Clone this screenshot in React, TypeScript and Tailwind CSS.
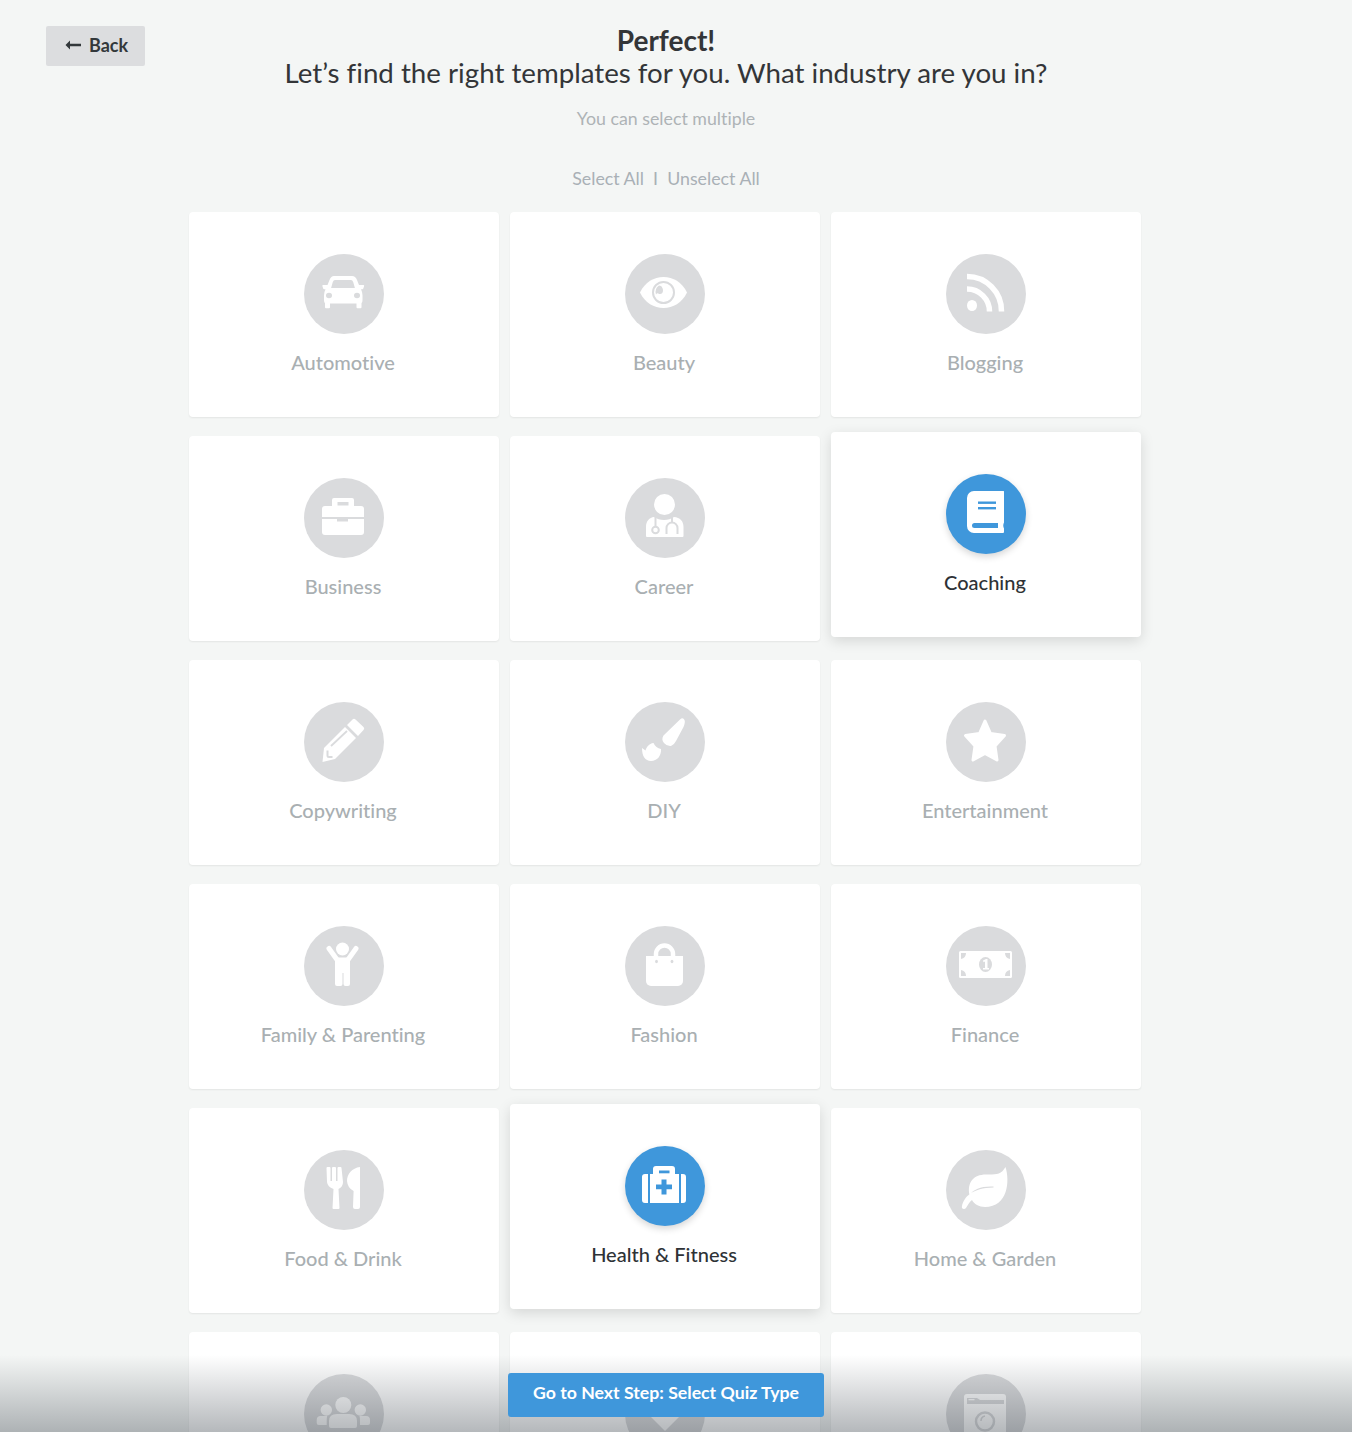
import React from "react";

const icons: Record<string, (d: string) => React.ReactNode> = {
  car: (d) => (
    <>
      <path fill="#fff" d="M30 22h18q3.500 0 5 4l2 5h4a1 1 0 0 1 1 1.400l-.7 2.200a1 1 0 0 1-1 .7H57q1.500 3 1.500 6v5q0 2-1 3v4a1 1 0 0 1-1 1h-3a1 1 0 0 1-1-1v-3.800H26v3.800a1 1 0 0 1-1 1h-3a1 1 0 0 1-1-1v-4q-1-1-1-3v-5q0-3 1.500-6h-1.300a1 1 0 0 1-1-.7l-.7-2.200a1 1 0 0 1 1-1.400h4l2-5q1.500-4 4.500-4z" />
      <path fill={d} d="M31 26h16q1.500 0 2.200 2l1.700 6H27.100l1.700-6q.7-2 2.200-2z" />
      <ellipse cx="25" cy="41.500" rx="3" ry="2.800" fill={d} />
      <ellipse cx="53" cy="41.500" rx="3" ry="2.800" fill={d} />
    </>
  ),
  eye: (d) => (
    <>
      <path fill="#fff" d="M15 38.500C20 28 29 23 38.500 23S57 28 62 38.500C57 49 48 54 38.500 54S20 49 15 38.500z" />
      <circle cx="38.500" cy="38.500" r="10.500" fill="none" stroke={d} strokeWidth="2" />
      <path fill={d} d="M34 31.500a8 8 0 0 0-3 9c1-1.500 2-1.500 3-.5 3 .5 4-1.500 4-3.500 0-2-1-3.500-2-4.500-.7-.2-1.300-.2-2-.5z" />
    </>
  ),
  rss: () => (
    <>
      <ellipse cx="26" cy="51.500" rx="5" ry="5.500" fill="#fff" />
      <path d="M21 35A22.500 22.500 0 0 1 43.500 57.500" fill="none" stroke="#fff" strokeWidth="5.500" />
      <path d="M21 22.500A34.500 34.500 0 0 1 55.500 57.500" fill="none" stroke="#fff" strokeWidth="5.500" />
    </>
  ),
  case: (d) => (
    <>
      <path fill="#fff" d="M30 20h18a2 2 0 0 1 2 2v6h7a3 3 0 0 1 3 3v8H18v-8a3 3 0 0 1 3-3h7v-6a2 2 0 0 1 2-2z" />
      <rect x="33.500" y="24" width="11" height="3.500" fill={d} />
      <path fill="#fff" d="M18 41h15v2.500h11V41h16v13a3 3 0 0 1-3 3H21a3 3 0 0 1-3-3z" />
    </>
  ),
  doctor: (d) => (
    <>
      <ellipse cx="39.500" cy="26.500" rx="10.500" ry="10.500" fill="#fff" />
      <path fill="#fff" d="M29 39c3 2 6 3 10 3s7-1 10-3c6 .5 9.500 4 9.500 10v9a1 1 0 0 1-1 1H22a1 1 0 0 1-1-1v-9c0-6 3.500-9.500 8-10z" />
      <g fill="none" stroke={d} strokeWidth="2">
        <path d="M30.500 39v9" />
        <circle cx="30.500" cy="52" r="3.300" />
        <path d="M47 39v5" />
        <path d="M41.500 56v-6a5.500 5.500 0 0 1 11 0v6" />
      </g>
    </>
  ),
  book: (d) => (
    <>
      <path fill="#fff" d="M28 17h29.500a.5.5 0 0 1 .5.5v31q-1.500 3 0 6V58a1 1 0 0 1-1 1H28a7 7 0 0 1-7-7V24a7 7 0 0 1 7-7z" />
      <rect x="32" y="27.500" width="18" height="2.400" fill={d} />
      <rect x="32" y="33" width="18" height="2.400" fill={d} />
      <path fill={d} d="M28.500 49H52v5H28.500a2.500 2.500 0 0 1 0-5z" />
    </>
  ),
  pencil: (d) => (
    <>
      <path fill="#fff" d="M41 25 52 36 31 57 18.500 60 20 46z" />
      <path fill="#fff" d="M43 23l5.500-5.500q1.500-1.500 3 0l8 7.500q1.500 1.500 0 3L54 34z" />
      <path d="M27 44 43 29" fill="none" stroke={d} strokeWidth="1.800" />
      <path d="M23.500 48.500v5a1.500 1.500 0 0 0 1.500 1.500h3.500" fill="none" stroke={d} strokeWidth="2" />
    </>
  ),
  brush: () => (
    <>
      <path fill="#fff" d="M55 17.500q3-2.500 4.500.5q1 2-1 7l-7.500 14q-2 4-5 5q-4 .5-7-3q-3-3.500-.5-7.500z" />
      <path fill="#fff" d="M17 46l3.500 2.500c1-3.500 3.500-7 8-7.500 1.500 3 4 5.500 7.500 6 .5 7-4 12-10 12-6 0-9-5-9-13z" />
    </>
  ),
  star: () => (
    <polygon
      fill="#fff"
      stroke="#fff"
      strokeWidth="3"
      strokeLinejoin="round"
      points="39,19 44.500,31.500 58.500,33.500 49,44 51,58 39,51.500 27,58 29,44 19.500,33.500 33.500,31.500"
    />
  ),
  child: () => (
    <>
      <circle cx="38.500" cy="23" r="6.500" fill="#fff" />
      <path d="M25 22.500 32.500 33M52 22.500 44.500 33" fill="none" stroke="#fff" strokeWidth="5" strokeLinecap="round" />
      <path fill="#fff" d="M31 31.500h15V58a2 2 0 0 1-2 2h-2.500a2 2 0 0 1-2-2V47h-1v11a2 2 0 0 1-2 2H33a2 2 0 0 1-2-2z" />
    </>
  ),
  bag: (d) => (
    <>
      <path d="M31 31v-3a8.500 8.500 0 0 1 17 0v3" fill="none" stroke="#fff" strokeWidth="4.500" />
      <path fill="#fff" d="M21 30h37v25a5 5 0 0 1-5 5H26a5 5 0 0 1-5-5z" />
      <ellipse cx="31.500" cy="35.500" rx="1.400" ry="1.800" fill={d} />
      <ellipse cx="47" cy="35.500" rx="1.400" ry="1.800" fill={d} />
    </>
  ),
  money: (d) => (
    <>
      <rect x="13" y="25" width="53" height="27" rx="1.500" fill="#fff" />
      <path fill={d} d="M15 27h5q0 5-5 6zM64 27h-5q0 5 5 6zM15 50h5q0-5-5-6zM64 50h-5q0-5 5-6z" />
      <ellipse cx="39.500" cy="38.500" rx="6.500" ry="7.500" fill={d} />
      <path fill="#fff" d="M37 34.500l3-1.500h1.500v9h1.500v1.500h-6V42h2v-6.500l-1.500.8z" />
    </>
  ),
  food: () => (
    <>
      <path fill="#fff" d="M22.500 18q0-1 1-1h2q1 0 1 1v13H28V18q0-1 1-1h2q1 0 1 1v13h1.500V18q0-1 1-1h2q1 0 1 1l1.500 14q0 5-4.500 7l1 19q0 1-1 1h-5q-1 0-1-1l1-19q-6-2-6.500-7z" />
      <path fill="#fff" d="M56 17v40q0 2-2 2h-3q-2 0-2-2l.6-16q-6-3-6.600-10c0-7 5-13 13-14z" />
    </>
  ),
  medical: (d) => (
    <>
      <path fill="#fff" d="M31 20h16a3 3 0 0 1 3 3v5h4v29H25V28h3v-5a3 3 0 0 1 3-3z" />
      <rect x="34" y="24.500" width="10.500" height="2.800" fill={d} />
      <path fill={d} d="M36.500 33.500h5v5h5.500v4.800h-5.500v5.200h-5v-5.200H31v-4.800h5.500z" />
      <path fill="#fff" d="M23 28v29h-3q-3 0-3-3V31q0-3 3-3zM56 28h2q3 0 3 3v23q0 3-3 3h-2z" />
    </>
  ),
  leaf: () => (
    <path
      fill="#fff"
      d="M59.500 17C64 31 62 57 39 57 33 57 28 54 26 50 23 52 22 55 20 58 18.500 60 15 59 16 56 18 47 26 38 47.500 37.500L47.500 36.500C35 36 28 39 23.500 45 21 33 27 24.500 40 24.500 50 24.500 55 25 59.500 17z"
    />
  ),
  people: () => (
    <>
      <circle cx="39.300" cy="31" r="8" fill="#fff" />
      <path fill="#fff" d="M25 47q0-7 8-7h12q8 0 8 7v5q0 2-2 2H27q-2 0-2-2z" />
      <circle cx="22.300" cy="36" r="5.700" fill="#fff" />
      <circle cx="56.300" cy="36" r="5.700" fill="#fff" />
      <path fill="#fff" d="M12.700 46q0-4 4-4h6.500q-.5 1.500-.5 5v4h-8q-2 0-2-2zM55.500 42h6.500q4 0 4 4v3q0 2-2 2h-8v-4q0-3.500-.5-5z" />
    </>
  ),
  heart: () => (
    <path fill="#fff" d="M40 57 21 38C14 30 19 19 29 20 34 20 38 23 40 26 42 23 46 20 51 20 61 19 66 30 59 38z" />
  ),
  camera: (d) => (
    <>
      <rect x="18" y="20" width="42" height="42" rx="3" fill="#fff" />
      <path fill={d} d="M21 24h10l3 2h24v4H21z" />
      <rect x="22.500" y="25" width="6" height="1.300" fill="#fff" />
      <circle cx="39" cy="47.500" r="9" fill="none" stroke={d} strokeWidth="2.500" />
      <path d="M35 47a5 5 0 0 1 4-5" fill="none" stroke={d} strokeWidth="1.500" />
    </>
  ),
};

function Icon({ name, d }: { name: string; d: string }) {
  return (
    <svg viewBox="0 0 80 80" className="block w-20 h-20">
      {icons[name](d)}
    </svg>
  );
}

const items: { label?: string; icon: string; on?: boolean }[] = [
  { label: "Automotive", icon: "car" },
  { label: "Beauty", icon: "eye" },
  { label: "Blogging", icon: "rss" },
  { label: "Business", icon: "case" },
  { label: "Career", icon: "doctor" },
  { label: "Coaching", icon: "book", on: true },
  { label: "Copywriting", icon: "pencil" },
  { label: "DIY", icon: "brush" },
  { label: "Entertainment", icon: "star" },
  { label: "Family & Parenting", icon: "child" },
  { label: "Fashion", icon: "bag" },
  { label: "Finance", icon: "money" },
  { label: "Food & Drink", icon: "food" },
  { label: "Health & Fitness", icon: "medical", on: true },
  { label: "Home & Garden", icon: "leaf" },
  { icon: "people" },
  { icon: "heart" },
  { icon: "camera" },
];

function Card({ label, icon, on }: { label?: string; icon: string; on?: boolean }) {
  return (
    <div
      className={
        on
          ? "h-[205px] -translate-y-1 rounded-[4px] bg-white pt-[42px] flex flex-col items-center shadow-[0_4px_14px_rgba(0,0,0,0.13)]"
          : "h-[205px] rounded-[4px] bg-white pt-[42px] flex flex-col items-center shadow-[0_1px_2px_rgba(0,0,0,0.07)]"
      }
    >
      <div
        className={
          on
            ? "w-20 h-20 rounded-full bg-[#3f97db] shadow-[0_3px_7px_rgba(0,0,0,0.16)]"
            : "w-20 h-20 rounded-full bg-[#dadbdd]"
        }
      >
        <Icon name={icon} d={on ? "#3f97db" : "#dadbdd"} />
      </div>
      {label && (
        <div
          className={
            on
              ? "mt-[18px] pr-[2px] text-[20px] leading-5 font-medium text-[#2e3236]"
              : "mt-[18px] pr-[2px] text-[20px] leading-5 font-medium text-[#a9afb2]"
          }
        >
          {label}
        </div>
      )}
    </div>
  );
}

export default function App() {
  return (
    <div className="relative h-[1432px] overflow-hidden bg-[#f4f6f5] font-['Lato','Liberation_Sans',sans-serif] [font-variant-ligatures:none]">
      <header className="grid w-[1332px] grid-cols-[1fr_auto_1fr]">
        <div className="pl-[46px] pt-[26px]">
          <button className="flex h-10 w-[99px] items-center justify-center gap-[8px] rounded-[2px] bg-[#dcdddf] pb-[2px] pl-[2px] text-[18px] font-bold text-[#33383b]">
            <svg viewBox="0 0 16 10" className="h-[10px] w-4">
              <path d="M5 0.5 0.5 5 5 9.500V6.200h11V3.800H5z" fill="#33383b" />
            </svg>
            Back
          </button>
        </div>
        <div className="pt-[24px] text-center">
          <h1 className="text-[28px] leading-8 font-bold text-[#333538]">Perfect!</h1>
          <p className="mt-[1px] text-[27.700px] leading-8 text-[#333538]">
            Let’s find the right templates for you. What industry are you in?
          </p>
          <p className="mt-[17px] text-[17.800px] leading-6 text-[#aeb3b6]">You can select multiple</p>
          <p className="mt-9 text-[17.800px] leading-6 text-[#a9b0b6]">Select All&nbsp; I&nbsp; Unselect All</p>
        </div>
        <div />
      </header>
      <main className="ml-[189px] mt-[22px] grid w-[952px] grid-cols-[repeat(3,310px)] gap-x-[11px] gap-y-[19px]">
        {items.map((it) => (
          <Card key={it.icon} {...it} />
        ))}
      </main>
      <div className="absolute inset-x-0 bottom-0 h-[77px] bg-gradient-to-b from-[rgba(30,40,50,0)] to-[rgba(30,40,50,0.33)]">
        <div className="flex w-[1332px] justify-center">
          <button className="mt-[18px] h-11 w-[316px] rounded-[3px] bg-[#3f97db] pb-[3px] text-[17.700px] font-bold text-white">
            Go to Next Step: Select Quiz Type
          </button>
        </div>
      </div>
    </div>
  );
}
